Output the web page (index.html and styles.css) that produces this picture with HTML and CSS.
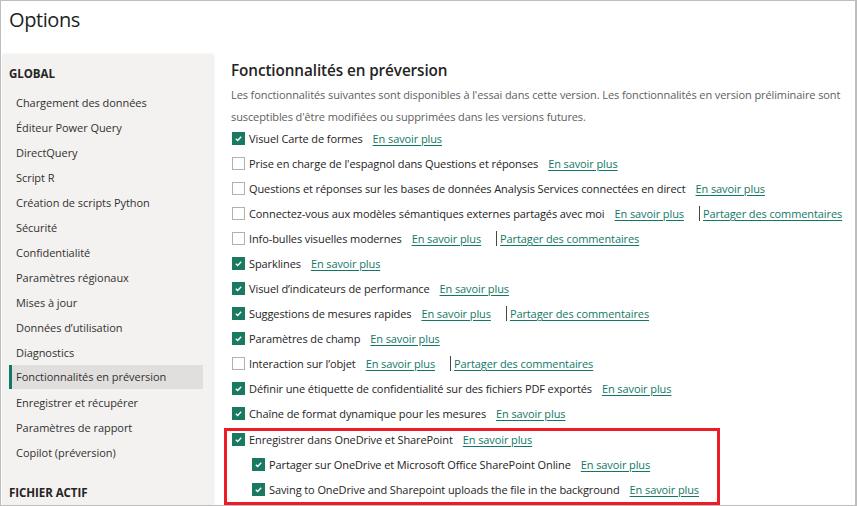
FILE: index.html
```html
<!DOCTYPE html>
<html lang="fr">
<head>
<meta charset="utf-8">
<title>Options</title>
<link rel="stylesheet" href="styles.css">
</head>
<body>
<div class="frame">
  <header class="title">Options</header>
  <div class="body">
    <nav class="side">
      <div class="sec">GLOBAL</div>
      <div class="item">Chargement des données</div>
      <div class="item">Éditeur Power Query</div>
      <div class="item">DirectQuery</div>
      <div class="item">Script R</div>
      <div class="item">Création de scripts Python</div>
      <div class="item">Sécurité</div>
      <div class="item">Confidentialité</div>
      <div class="item">Paramètres régionaux</div>
      <div class="item">Mises à jour</div>
      <div class="item">Données d’utilisation</div>
      <div class="item">Diagnostics</div>
      <div class="item sel">Fonctionnalités en préversion</div>
      <div class="item">Enregistrer et récupérer</div>
      <div class="item">Paramètres de rapport</div>
      <div class="item">Copilot (préversion)</div>
      <div class="sec sec2">FICHIER ACTIF</div>
    </nav>
    <main class="main">
      <h1 class="h">Fonctionnalités en préversion</h1>
      <p class="desc">Les fonctionnalités suivantes sont disponibles à l'essai dans cette version. Les fonctionnalités en version préliminaire sont susceptibles d'être modifiées ou supprimées dans les versions futures.</p>
      <div class="rows">
        <div class="row"><span class="cb on"><svg viewBox="0 0 13 13"><polyline points="3.3,6.8 5.5,8.9 9.7,4.4"/></svg></span><span class="lbl">Visuel Carte de formes</span><a class="lnk">En savoir plus</a></div>
        <div class="row"><span class="cb"></span><span class="lbl">Prise en charge de l'espagnol dans Questions et réponses</span><a class="lnk">En savoir plus</a></div>
        <div class="row"><span class="cb"></span><span class="lbl">Questions et réponses sur les bases de données Analysis Services connectées en direct</span><a class="lnk">En savoir plus</a></div>
        <div class="row"><span class="cb"></span><span class="lbl">Connectez-vous aux modèles sémantiques externes partagés avec moi</span><a class="lnk">En savoir plus</a><span class="sep"></span><a class="lnk2">Partager des commentaires</a></div>
        <div class="row"><span class="cb"></span><span class="lbl">Info-bulles visuelles modernes</span><a class="lnk">En savoir plus</a><span class="sep"></span><a class="lnk2">Partager des commentaires</a></div>
        <div class="row"><span class="cb on"><svg viewBox="0 0 13 13"><polyline points="3.3,6.8 5.5,8.9 9.7,4.4"/></svg></span><span class="lbl">Sparklines</span><a class="lnk">En savoir plus</a></div>
        <div class="row"><span class="cb on"><svg viewBox="0 0 13 13"><polyline points="3.3,6.8 5.5,8.9 9.7,4.4"/></svg></span><span class="lbl">Visuel d’indicateurs de performance</span><a class="lnk">En savoir plus</a></div>
        <div class="row"><span class="cb on"><svg viewBox="0 0 13 13"><polyline points="3.3,6.8 5.5,8.9 9.7,4.4"/></svg></span><span class="lbl">Suggestions de mesures rapides</span><a class="lnk">En savoir plus</a><span class="sep"></span><a class="lnk2">Partager des commentaires</a></div>
        <div class="row"><span class="cb on"><svg viewBox="0 0 13 13"><polyline points="3.3,6.8 5.5,8.9 9.7,4.4"/></svg></span><span class="lbl">Paramètres de champ</span><a class="lnk">En savoir plus</a></div>
        <div class="row"><span class="cb"></span><span class="lbl">Interaction sur l’objet</span><a class="lnk">En savoir plus</a><span class="sep"></span><a class="lnk2">Partager des commentaires</a></div>
        <div class="row"><span class="cb on"><svg viewBox="0 0 13 13"><polyline points="3.3,6.8 5.5,8.9 9.7,4.4"/></svg></span><span class="lbl">Définir une étiquette de confidentialité sur des fichiers PDF exportés</span><a class="lnk">En savoir plus</a></div>
        <div class="row"><span class="cb on"><svg viewBox="0 0 13 13"><polyline points="3.3,6.8 5.5,8.9 9.7,4.4"/></svg></span><span class="lbl">Chaîne de format dynamique pour les mesures</span><a class="lnk">En savoir plus</a></div>
        <div class="mark">
          <div class="row first"><span class="cb on"><svg viewBox="0 0 13 13"><polyline points="3.3,6.8 5.5,8.9 9.7,4.4"/></svg></span><span class="lbl">Enregistrer dans OneDrive et SharePoint</span><a class="lnk">En savoir plus</a></div>
          <div class="row sub"><span class="cb on"><svg viewBox="0 0 13 13"><polyline points="3.3,6.8 5.5,8.9 9.7,4.4"/></svg></span><span class="lbl">Partager sur OneDrive et Microsoft Office SharePoint Online</span><a class="lnk">En savoir plus</a></div>
          <div class="row sub"><span class="cb on"><svg viewBox="0 0 13 13"><polyline points="3.3,6.8 5.5,8.9 9.7,4.4"/></svg></span><span class="lbl">Saving to OneDrive and Sharepoint uploads the file in the background</span><a class="lnk">En savoir plus</a></div>
        </div>
      </div>
    </main>
  </div>
</div>
</body>
</html>
```

FILE: styles.css
```css
* { box-sizing: border-box; }
html, body { margin: 0; padding: 0; }
body {
  width: 857px;
  height: 506px;
  overflow: hidden;
  background: #fff;
  font-family: "Open Sans", "Noto Sans", sans-serif;
  color: #252423;
}
.frame {
  width: 857px;
  height: 506px;
  border: 1px solid #bdbdbd;
  border-right: 2px solid #bdbdbd;
  display: flex;
  flex-direction: column;
  overflow: hidden;
}
.title {
  height: 53px;
  padding: 4px 0 0 8px;
  font-size: 20px;
  letter-spacing: -0.4px;
  line-height: 30px;
  color: #201f1e;
}
.body {
  flex: 1;
  display: flex;
  min-height: 0;
}
.side {
  width: 211px;
  margin-left: 1px;
  background: #f3f2f1;
  padding-top: 7px;
  box-shadow: 1px 0 2px rgba(0,0,0,0.08);
  font-size: 11px;
  letter-spacing: -0.05px;
}
.sec {
  height: 25px;
  line-height: 25px;
  padding-left: 7px;
  font-weight: 700;
  font-size: 11.5px;
  color: #252423;
  margin-bottom: 4px;
}
.sec2 { margin-top: 15px; }
.item {
  height: 25px;
  line-height: 25px;
  margin: 0 10px 0 7px;
  padding-left: 7px;
  color: #323130;
  white-space: nowrap;
}
.item.sel {
  background: #e1dfdd;
  border-left: 3px solid #117865;
  padding-left: 4px;
  height: 24px;
  line-height: 24px;
  margin-bottom: 1px;
}
.main {
  flex: 1;
  padding: 4px 0 0 18px;
  min-width: 0;
}
.h {
  margin: 0;
  font-size: 15.3px;
  letter-spacing: -0.1px;
  font-weight: 600;
  line-height: 24px;
  color: #252423;
}
.desc {
  margin: 2px 0 -2px 0;
  font-size: 11px;
  letter-spacing: -0.1px;
  line-height: 22px;
  color: #605e5c;
  width: 620px;
}
.rows { display: flex; flex-direction: column; }
.row {
  height: 25px;
  display: flex;
  align-items: center;
  font-size: 11px;
  letter-spacing: -0.1px;
  white-space: nowrap;
  padding-left: 1px;
}
.cb {
  width: 13px;
  height: 13px;
  border: 1px solid #b3b0ad;
  background: #fff;
  margin-right: 4px;
  flex: none;
  display: flex;
}
.cb.on {
  background: #1a7a61;
  border-color: #1a7a61;
}
.cb svg {
  width: 11px;
  height: 11px;
  fill: none;
  stroke: #fff;
  stroke-width: 1.6;
}
.lbl { color: #252423; }
.lnk, .lnk2 {
  color: #117865;
  text-decoration: underline;
  text-underline-offset: 2px;
}
.lnk { margin-left: 10px; }
.sep {
  width: 1px;
  height: 15px;
  background: #484644;
  margin: 0 3px 0 15px;
}
.mark {
  margin: 2px 0 0 -7px;
  width: 496px;
  border: 3px solid #ee1c24;
  padding-left: 4px;
}
.mark .row.first { margin-top: -4px; }
.mark .row.sub { padding-left: 21px; }
```
